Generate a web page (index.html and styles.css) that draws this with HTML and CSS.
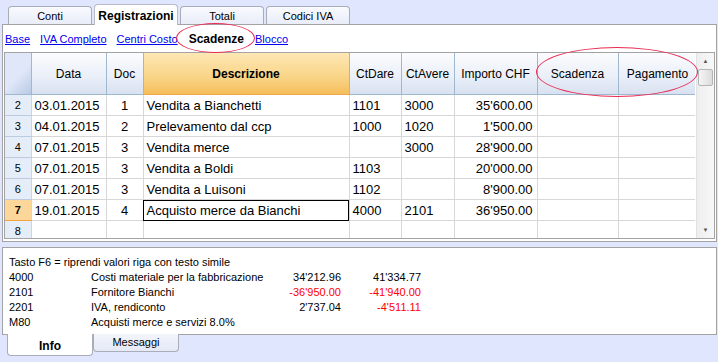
FILE: index.html
```html
<!DOCTYPE html>
<html lang="it">
<head>
    <meta charset="UTF-8">
    <title>Registrazioni</title>
    <link rel="stylesheet" href="styles.css">
</head>
<body>
    <div class="tabs">
        <div class="tab">Conti</div>
        <div class="tab active">Registrazioni</div>
        <div class="tab">Totali</div>
        <div class="tab">Codici IVA</div>
    </div>

    <div class="panel">
        <div class="views">
            <a href="#">Base</a>
            <a href="#">IVA Completo</a>
            <a href="#">Centri Costo</a>
            <span class="current">Scadenze</span>
            <a href="#">Blocco</a>
        </div>

        <div class="grid">
            <div class="grid-body">
                <table>
                    <colgroup>
                        <col style="width:26px"><col style="width:75px"><col style="width:37px">
                        <col style="width:206px"><col style="width:52px"><col style="width:53px">
                        <col style="width:83px"><col style="width:81px"><col style="width:79px">
                    </colgroup>
                    <thead>
                        <tr>
                            <th class="corner"></th>
                            <th>Data</th>
                            <th>Doc</th>
                            <th class="sel">Descrizione</th>
                            <th>CtDare</th>
                            <th>CtAvere</th>
                            <th>Importo CHF</th>
                            <th>Scadenza</th>
                            <th>Pagamento</th>
                        </tr>
                    </thead>
                    <tbody>
                        <tr><td class="rh">2</td><td>03.01.2015</td><td class="c">1</td><td>Vendita a Bianchetti</td><td>1101</td><td>3000</td><td class="r">35'600.00</td><td></td><td></td></tr>
                        <tr><td class="rh">3</td><td>04.01.2015</td><td class="c">2</td><td>Prelevamento dal ccp</td><td>1000</td><td>1020</td><td class="r">1'500.00</td><td></td><td></td></tr>
                        <tr><td class="rh">4</td><td>07.01.2015</td><td class="c">3</td><td>Vendita merce</td><td></td><td>3000</td><td class="r">28'900.00</td><td></td><td></td></tr>
                        <tr><td class="rh">5</td><td>07.01.2015</td><td class="c">3</td><td>Vendita a Boldi</td><td>1103</td><td></td><td class="r">20'000.00</td><td></td><td></td></tr>
                        <tr><td class="rh">6</td><td>07.01.2015</td><td class="c">3</td><td>Vendita a Luisoni</td><td>1102</td><td></td><td class="r">8'900.00</td><td></td><td></td></tr>
                        <tr><td class="rh cur">7</td><td>19.01.2015</td><td class="c">4</td><td class="focus">Acquisto merce da Bianchi</td><td>4000</td><td>2101</td><td class="r">36'950.00</td><td></td><td></td></tr>
                        <tr><td class="rh">8</td><td></td><td></td><td></td><td></td><td></td><td></td><td></td><td></td></tr>
                    </tbody>
                </table>
            </div>
            <div class="scrollbar">
                <span class="arrow">&#9650;</span>
                <div class="thumb"></div>
                <div class="track"></div>
                <span class="arrow">&#9660;</span>
            </div>
        </div>
    </div>

    <div class="info">
        <div class="line">Tasto F6 = riprendi valori riga con testo simile</div>
        <div class="line"><span class="acc">4000</span><span class="desc">Costi materiale per la fabbricazione</span><span class="amt">34'212.96</span><span class="amt">41'334.77</span></div>
        <div class="line"><span class="acc">2101</span><span class="desc">Fornitore Bianchi</span><span class="amt neg">-36'950.00</span><span class="amt neg">-41'940.00</span></div>
        <div class="line"><span class="acc">2201</span><span class="desc">IVA, rendiconto</span><span class="amt">2'737.04</span><span class="amt neg">-4'511.11</span></div>
        <div class="line"><span class="acc">M80</span><span class="desc">Acquisti merce e servizi 8.0%</span></div>
    </div>

    <div class="bottom-tabs">
        <div class="btab active">Info</div>
        <div class="btab">Messaggi</div>
    </div>

    <div class="mark mark-view"></div>
    <div class="mark mark-cols"></div>
</body>
</html>
```

FILE: styles.css
```css
body { margin: 0; background: #dfe6fd; font-family: 'Liberation Sans', Arial, sans-serif; color: #000; width: 718px; height: 362px; overflow: hidden; }

.tabs { display: flex; align-items: flex-end; height: 24px; padding-left: 8px; gap: 2px; }
.tab { width: 82px; height: 17px; border: 1px solid #a9adb8; border-bottom: none; border-radius: 4px 4px 0 0; background: linear-gradient(#f9faff, #e9edf8); font-size: 11px; text-align: center; line-height: 19px; }
.tab.active { height: 20px; background: #fff; font-weight: bold; font-size: 12px; line-height: 22px; position: relative; top: 1px; border-color: #b9bcc5; }

.panel { margin: 0 1px 0 2px; background: #fff; border: 1px solid #a3a3a3; height: 216px; }
.views { height: 27px; display: flex; align-items: center; gap: 10px; padding-left: 2px; font-size: 11px; }
.views a { color: #0000ee; text-decoration: underline; }
.views .current { font-weight: bold; font-size: 12px; margin: 0 1px; }

.grid { display: flex; margin: 0 1px; border: 1px solid #a3a3a3; height: 185px; }
.grid-body { width: 692px; overflow: hidden; }
table { border-collapse: collapse; table-layout: fixed; width: 692px; }
th { height: 41px; padding: 0; font-size: 12px; font-weight: normal; background: linear-gradient(#fbfcfe, #e9eef8 60%, #d8e1f0); border-right: 1px solid #9fb7cf; border-bottom: 1px solid #9fb7cf; }
th.sel { background: linear-gradient(#fde7b4, #f9d486 60%, #f5bd5b); border-right-color: #f0a94c; border-bottom-color: #f0a94c; font-weight: bold; font-size: 12px; }
th.corner { background: linear-gradient(135deg, #dfe7f9 55%, #b9c9e3); }
td { height: 20px; padding: 0 3px; font-size: 13px; border-right: 1px solid #d7d7d7; border-bottom: 1px solid #d7d7d7; white-space: nowrap; overflow: hidden; }
td.c { text-align: center; }
td.r { text-align: right; padding-right: 4px; }
td.rh { background: #e5edf8; font-size: 11px; text-align: center; border-right-color: #c9d6e8; border-bottom-color: #bccbe0; padding: 0; }
td.rh.cur { background: #fdd79a; font-weight: bold; border-bottom: 1px solid #f3a43c; }
td.focus { outline: 1px solid #000; outline-offset: -1px; }

.scrollbar { width: 17px; margin-left: 1px; background: linear-gradient(90deg, #eeeeee, #f8f8f8); display: flex; flex-direction: column; align-items: center; border-left: 1px solid #e2e2e2; }
.arrow { font-size: 6px; color: #555; height: 16px; line-height: 16px; }
.thumb { width: 13px; height: 15px; border: 1px solid #b5b5b5; border-radius: 2px; background: linear-gradient(90deg, #f5f5f5, #dcdcdc); }
.track { flex: 1; }

.info { margin: 5px 1px 0 2px; height: 79px; background: #fff; border: 1px solid #a3a3a3; padding-top: 7px; font-size: 11px; }
.line { display: flex; height: 15px; line-height: 15px; padding-left: 6px; white-space: nowrap; }
.line span { flex-shrink: 0; }
.acc { width: 82px; }
.desc { width: 170px; }
.amt { width: 80px; text-align: right; }
.neg { color: #ff0000; }

.bottom-tabs { display: flex; align-items: flex-start; padding-left: 7px; margin-top: -1px; }
.btab { width: 84px; height: 17px; border: 1px solid #a9adb8; border-top: none; border-radius: 0 0 4px 4px; background: linear-gradient(#f3f5fc, #e5e9f6); font-size: 11px; text-align: center; line-height: 17px; }
.btab.active { height: 21px; background: #fff; font-weight: bold; font-size: 12px; line-height: 24px; width: 84px; }

.mark { position: absolute; border: 1.5px solid #ea2a52; border-radius: 50%; }
.mark-view { left: 176px; top: 23px; width: 77px; height: 28px; }
.mark-cols { left: 536px; top: 47px; width: 160px; height: 48px; }
```
